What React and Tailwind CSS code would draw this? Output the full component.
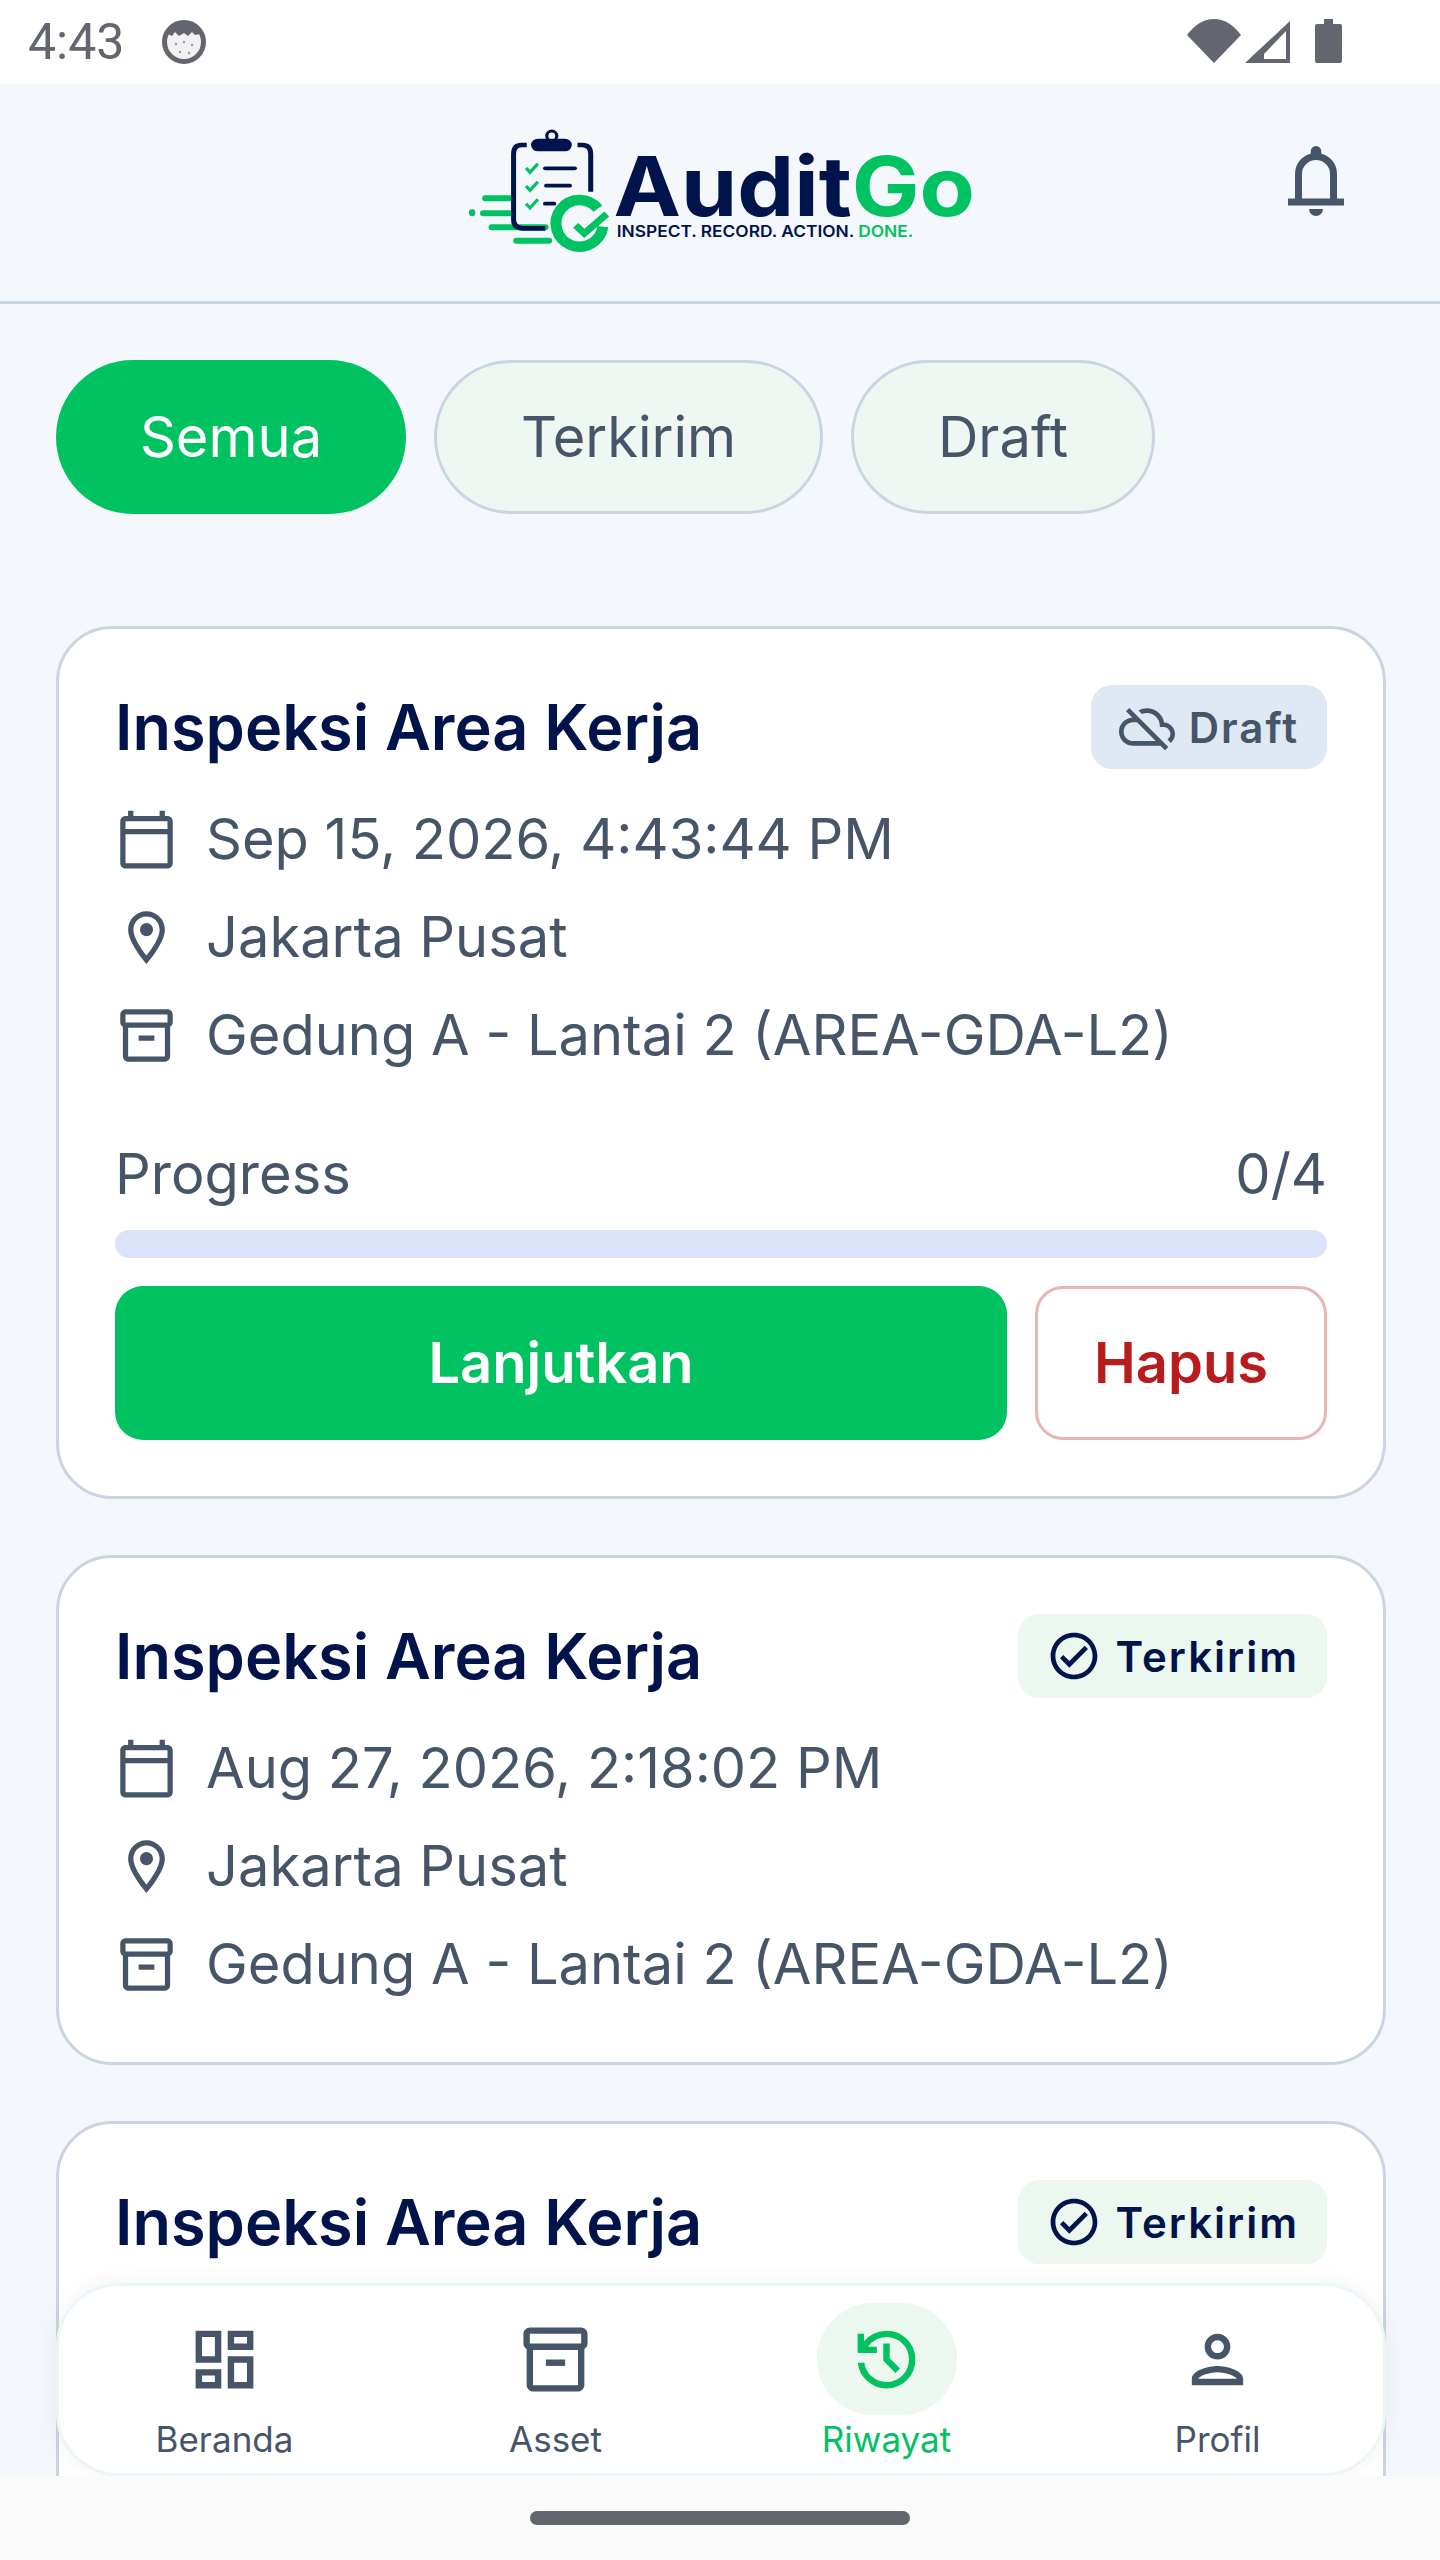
import React from "react";
import {
  MdOutlineCalendarToday, MdOutlineLocationOn, MdOutlineInventory2,
  MdOutlineCloudOff, MdOutlineCheckCircle, MdOutlineDashboard, MdOutlinePerson,
} from "react-icons/md";

const NAVY = "#00134a";
const GREEN = "#00c261";

function Bell() {
  return (
    <svg width="84" height="84" viewBox="0 -960 960 960" fill="#475569" className="block">
      <path d="M160-200v-80h80v-280q0-83 50-147.5T420-792v-28q0-25 17.5-42.5T480-880q25 0 42.5 17.5T540-820v28q80 20 130 84.5T720-560v280h80v80H160Zm320-300Zm0 420q-33 0-56.5-23.5T400-160h160q0 33-23.5 56.5T480-80ZM320-280h320v-280q0-66-47-113t-113-47q-66 0-113 47t-47 113v280Z" />
    </svg>
  );
}

function HistoryIcon({ size, color }) {
  return (
    <svg width={size} height={size} viewBox="0 -960 960 960" fill={color} className="block">
      <path d="M480-120q-138 0-240.5-91.5T122-440h82q14 104 92.5 172T480-200q117 0 198.5-81.5T760-480q0-117-81.5-198.5T480-760q-69 0-129 32t-101 88h110v80H120v-240h80v94q51-64 124.5-99T480-840q150 0 255 105t105 255q0 150-105 255T480-120Zm112-192L440-464v-216h80v184l128 128-56 56Z" />
    </svg>
  );
}

function Logo() {
  return (
    <svg width="560" height="160" viewBox="0 0 1568 480" preserveAspectRatio="none" className="block shrink-0">
      <g stroke={GREEN} strokeLinecap="round" fill="none" strokeWidth="18">
        <path d="M127 265 H200" />
        <path d="M121 310 H200" />
        <path d="M145 352 H295" />
        <path d="M214 392 H305" />
      </g>
      <ellipse cx="90" cy="308" rx="9" ry="10" fill={GREEN} />
      <g fill="none" stroke={NAVY} strokeLinecap="round">
        <path d="M243 105 H228 Q206 105 206 132 V328 Q206 355 232 355 H295" strokeWidth="14" strokeLinecap="butt" />
        <path d="M385 105 H398 Q422 105 422 132 V245" strokeWidth="14" strokeLinecap="butt" />
        <ellipse cx="313" cy="78" rx="14" ry="15" strokeWidth="9" />
        <path d="M294 175 H378" strokeWidth="11" />
        <path d="M297 227 H364" strokeWidth="11" />
        <path d="M294 281 H320" strokeWidth="11" />
      </g>
      <rect x="255" y="86" width="114" height="38" rx="19" fill={NAVY} />
      <g fill="none" stroke={GREEN} strokeWidth="9">
        <path d="M241 174 L252 187 L274 161" />
        <path d="M241 228 L252 241 L274 215" />
        <path d="M241 281 L252 294 L274 268" />
      </g>
      <path d="M442 296 A66 70 0 1 0 456 350" fill="none" stroke={GREEN} strokeWidth="31" />
      <path d="M380 346 L404 370 L467 312" fill="none" stroke={GREEN} strokeWidth="20" />
      <text x="486" y="318" fontSize="246" textLength="1012" lengthAdjust="spacingAndGlyphs" style={{ fontFamily: "Inter, sans-serif", fontWeight: 700 }}>
        <tspan fill={NAVY}>Audit</tspan>
        <tspan fill={GREEN}>Go</tspan>
      </text>
      <text x="495" y="380" fontSize="48" textLength="830" lengthAdjust="spacingAndGlyphs" style={{ fontFamily: "Inter, sans-serif", fontWeight: 600 }}>
        <tspan fill={NAVY}>INSPECT. RECORD. ACTION. </tspan>
        <tspan fill={GREEN}>DONE.</tspan>
      </text>
    </svg>
  );
}

function StatusBar() {
  return (
    <div className="h-[84px] bg-white flex items-center justify-between shrink-0 pl-[28px] pr-[98px] text-[#63666e]">
      <div className="flex items-center gap-[38px]">
        <span className="text-[50px] leading-none [font-family:Roboto,sans-serif]">4:43</span>
        <svg width="44" height="44" viewBox="0 0 44 44" className="block">
          <circle cx="22" cy="22" r="19.5" fill="#f1f1f2" stroke="#63666e" strokeWidth="5" />
          <path d="M6 14 Q9 3 22 3 Q35 3 38 14 L33 15 L30 12 L26 16 L22 13 L17 16 L13 12 L10 16 Z" fill="#63666e" />
          <g fill="#9a9ca2">
            <circle cx="14" cy="24" r="1.2" /><circle cx="22" cy="22" r="1.2" /><circle cx="30" cy="25" r="1.2" />
            <circle cx="18" cy="32" r="1.2" /><circle cx="27" cy="33" r="1.2" />
          </g>
        </svg>
      </div>
      <div className="flex items-center gap-[4px] pb-[3px]">
        <svg width="54" height="44" viewBox="0 0 54 44" className="block">
          <path d="M0 16 Q12 0 27 0 Q42 0 54 16 L27 44 Z" fill="#63666e" />
        </svg>
        <svg width="45" height="44" viewBox="0 0 45 44" className="block">
          <path fillRule="evenodd" d="M45 2 V44 H0 Z M41 12 L19 35 V40 H41 Z" fill="#63666e" />
        </svg>
        <svg width="27" height="44" viewBox="0 0 27 44" className="block ml-[21px]">
          <path d="M9 0 H18 V5 H25 Q27 5 27 7 V42 Q27 44 25 44 H2 Q0 44 0 42 V7 Q0 5 2 5 H9 Z" fill="#63666e" />
        </svg>
      </div>
    </div>
  );
}

function Header() {
  return (
    <div className="h-[220px] shrink-0 bg-[#f4f7fc] border-b-[3.5px] border-[#cbd5e1] grid grid-cols-[1fr_560px_1fr] pt-[26px]">
      <div />
      <Logo />
      <div className="flex justify-end pr-[82px] pt-[29px]">
        <Bell />
      </div>
    </div>
  );
}

function Pill({ children, active, w }) {
  return (
    <div
      className={
        active
          ? "h-[154px] w-[350px] rounded-full bg-[#00c261] text-white flex items-center justify-center text-[56px]"
          : `h-[154px] ${w} rounded-full bg-[#eef7f2] border-[3.5px] border-[#cbd5e1] text-[#475569] flex items-center justify-center text-[56px]`
      }
    >
      {children}
    </div>
  );
}

function Meta({ Icon, children }) {
  return (
    <div className="flex items-center gap-[28px] h-[84px] text-[56px] leading-[84px] text-[#475569]">
      <Icon size={63} color="#475569" className="block shrink-0" />
      <span>{children}</span>
    </div>
  );
}

function Card({ date, status, children }) {
  const draft = status === "Draft";
  return (
    <div className="bg-white border-[3.5px] border-[#cbd5e1] rounded-[56px] p-[56px] shrink-0">
      <div className="flex items-center justify-between h-[84px] mb-[28px]">
        <span className="text-[63px] font-semibold text-[#00134a] leading-[84px]">Inspeksi Area Kerja</span>
        <div
          className={
            draft
              ? "h-[84px] rounded-[21px] bg-[#dfe8f3] text-[#475569] flex items-center gap-[14px] px-[28px] text-[42px] font-semibold tracking-[2px]"
              : "h-[84px] rounded-[21px] bg-[#ecf7f0] text-[#00134a] flex items-center gap-[14px] px-[28px] text-[42px] font-semibold tracking-[2px]"
          }
        >
          {draft ? (
            <MdOutlineCloudOff size={56} className="block" />
          ) : (
            <MdOutlineCheckCircle size={56} className="block" />
          )}
          <span>{status}</span>
        </div>
      </div>
      <div className="flex flex-col gap-[14px]">
        <Meta Icon={MdOutlineCalendarToday}>{date}</Meta>
        <Meta Icon={MdOutlineLocationOn}>Jakarta Pusat</Meta>
        <Meta Icon={MdOutlineInventory2}>Gedung A - Lantai 2 (AREA-GDA-L2)</Meta>
      </div>
      {children}
    </div>
  );
}

function NavItem({ Icon, label, active }) {
  return (
    <div className="flex flex-col items-center">
      <div className={active ? "w-[140px] h-[112px] rounded-full bg-[#ecf7f0] flex items-center justify-center" : "w-[140px] h-[112px] flex items-center justify-center"}>
        <Icon size={77} color={active ? GREEN : "#475569"} className="block" />
      </div>
      <span className={active ? "text-[35px] leading-[49px] text-[#00c261]" : "text-[35px] leading-[49px] text-[#475569]"}>{label}</span>
    </div>
  );
}

export default function App() {
  return (
    <div className="w-[1440px] h-[2560px] flex flex-col overflow-hidden bg-[#f4f7fc] [font-family:Inter,sans-serif]">
      <StatusBar />
      <Header />
      <div className="flex-1 min-h-0 relative overflow-hidden pl-[56px] pr-[54px]">
        <div className="flex gap-[28px] mt-[56px] mb-[112px]">
          <Pill active>Semua</Pill>
          <Pill w="w-[389px]">Terkirim</Pill>
          <Pill w="w-[304px]">Draft</Pill>
        </div>
        <div className="flex flex-col gap-[56px]">
          <Card date="Sep 15, 2026, 4:43:44 PM" status="Draft">
            <div className="flex items-center justify-between h-[84px] mt-[55px] text-[56px] text-[#475569]">
              <span>Progress</span>
              <span>0/4</span>
            </div>
            <div className="h-[28px] mt-[14px] rounded-full bg-[#dbe3fa]" />
            <div className="flex gap-[28px] mt-[28px]">
              <div className="flex-1 h-[154px] rounded-[28px] bg-[#00c261] text-white text-[56px] font-semibold flex items-center justify-center">Lanjutkan</div>
              <div className="w-[292px] h-[154px] rounded-[28px] border-[3.5px] border-[#e9b4b4] text-[#b91c1c] text-[56px] font-semibold flex items-center justify-center">Hapus</div>
            </div>
          </Card>
          <Card date="Aug 27, 2026, 2:18:02 PM" status="Terkirim" />
          <Card date="Aug 27, 2026, 2:18:02 PM" status="Terkirim" />
        </div>
        <div className="absolute left-[56px] right-[54px] bottom-0 h-[193px] rounded-[63px] bg-white border-[3.5px] border-[#ecf7f0] shadow-[0_0_28px_rgba(15,23,42,0.06)] grid grid-cols-4 pt-[17px]">
          <NavItem Icon={MdOutlineDashboard} label="Beranda" />
          <NavItem Icon={MdOutlineInventory2} label="Asset" />
          <NavItem Icon={HistoryIcon} label="Riwayat" active />
          <NavItem Icon={MdOutlinePerson} label="Profil" />
        </div>
      </div>
      <div className="h-[84px] shrink-0 bg-[#fafafa] flex justify-center pt-[35px] relative">
        <div className="w-[380px] h-[14px] rounded-full bg-[#63666e]" />
      </div>
    </div>
  );
}
